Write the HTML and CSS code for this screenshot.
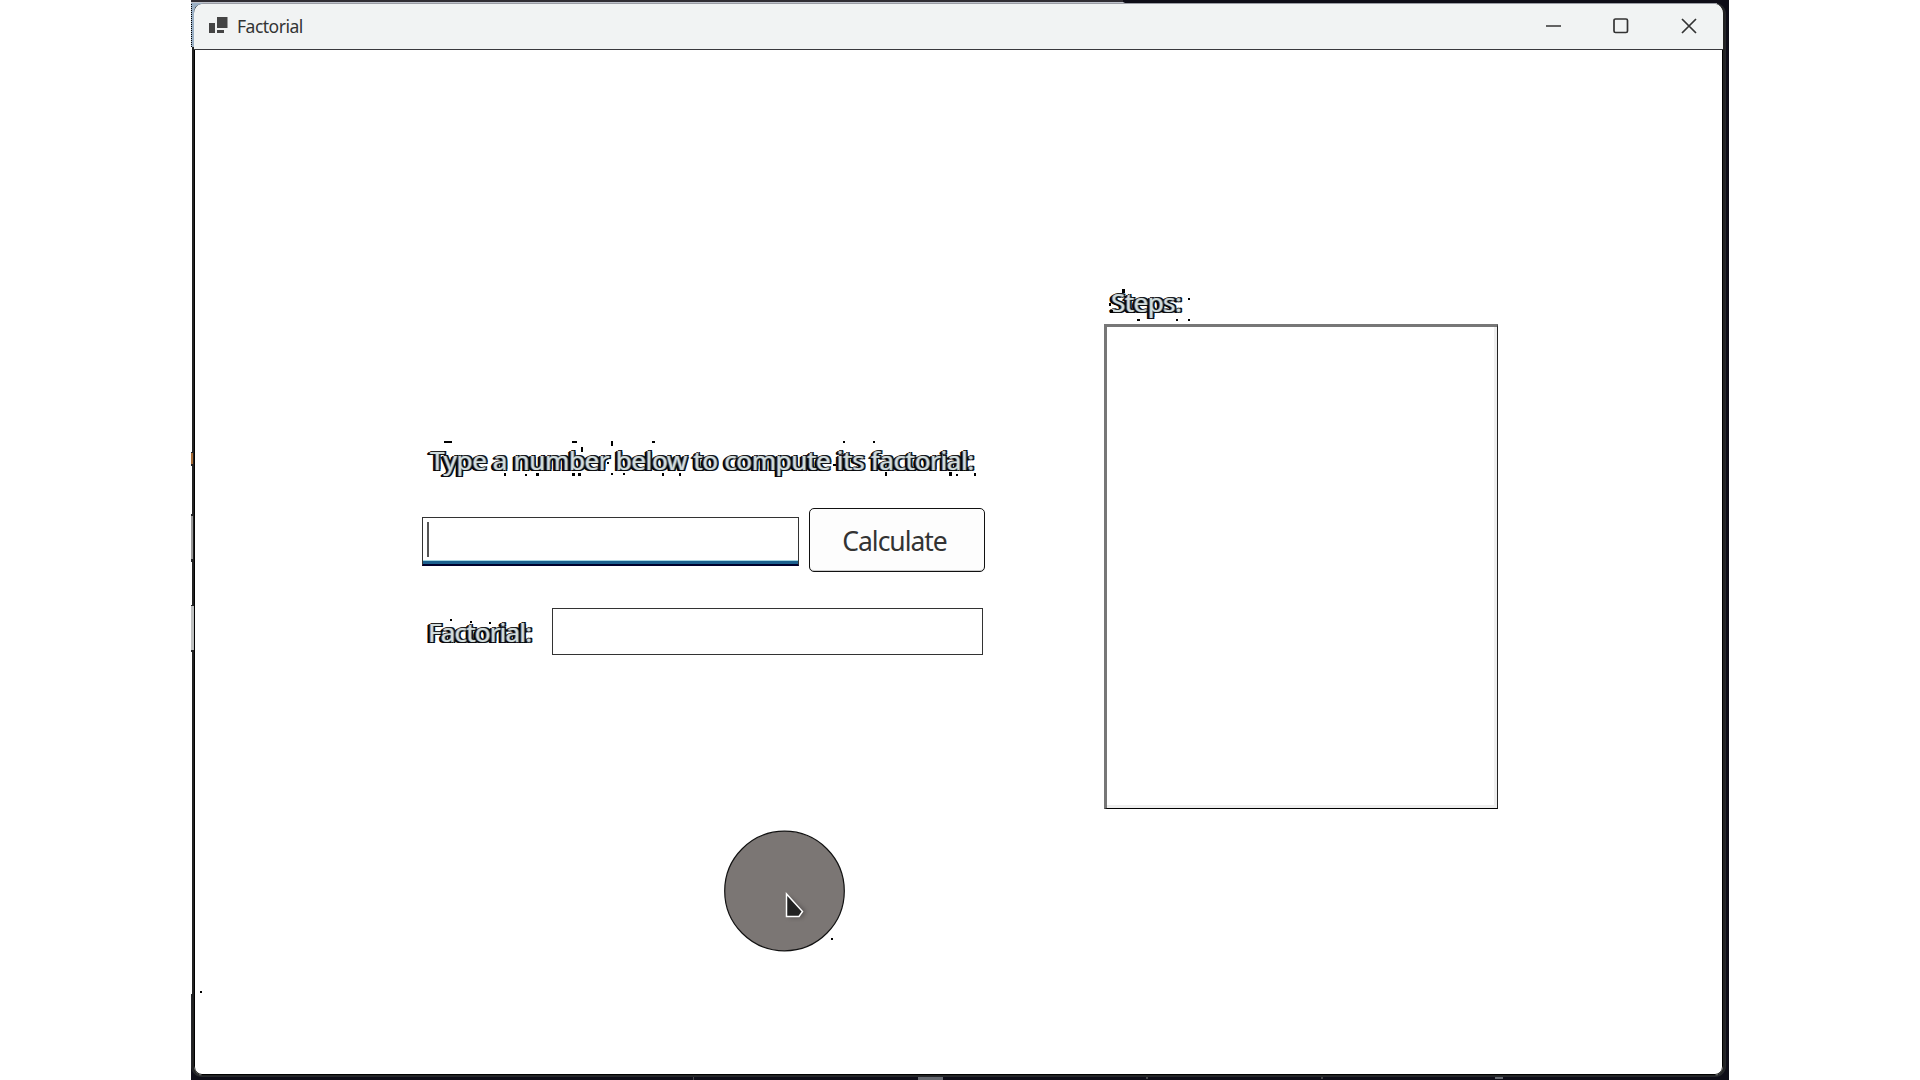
FILE: index.html
```
<!DOCTYPE html>
<html lang="en">
<head>
<meta charset="utf-8">
<title>Factorial</title>
<link rel="stylesheet" href="styles.css">
</head>
<body>
<div class="desktop">
  <section class="window">
    <header class="titlebar">
      <svg class="app-icon" width="19" height="17" viewBox="0 0 19 17"><path fill="#444" d="M0 6h6v10H0zM8 0h10.500v11H8zM8 13h7v3H8z"/></svg>
      <h1 class="title"><span>Factorial</span></h1>
      <svg class="controls" width="152" height="18" viewBox="0 0 152 18" fill="none" stroke="#333" stroke-width="1.700"><path d="M0 9h15"/><rect x="68" y="2" width="13.500" height="13.500" rx="1.500"/><path d="M136 2l14 14M150 2l-14 14"/></svg>
    </header>
    <main class="client">
      <form class="calculator">
        <label class="label prompt"><span>Type a number below to compute its factorial:</span></label>
        <div class="entry">
          <div class="number-box"><i class="caret"></i></div>
          <button class="calculate" type="button"><span>Calculate</span></button>
        </div>
        <div class="result">
          <label class="label factorial-label"><span>Factorial:</span></label>
          <div class="result-box"></div>
        </div>
      </form>
      <section class="steps">
        <h2 class="label steps-label"><span>Steps:</span></h2>
        <div class="steps-list"></div>
      </section>
    </main>
  </section>
  <svg class="overlay" width="1538" height="1080" viewBox="191 0 1538 1080">
    <path fill="#302d33" d="M191 0h932v3H191z"/><path fill="#bfc2cb" d="M191 2h932l4 2H191z"/><path fill="#9b9da5" d="M193 3h1524v1H193z"/>
    <path fill="#9bb0c5" d="M191 3h12q-9 2-9 10v34h-3z"/>
    <path stroke="#000" stroke-dasharray="1 1" d="M190.500 4v43M191.500 4v43"/>
    <path fill="#fff" d="M191 47h1v405h-1zM191 466h1v48h-1zM191 562h1v43h-1zM191 652h1v342h-1z"/>
    <path fill="#a66b36" d="M191 453h2v11h-2z"/><path fill="#999" d="M191 516h2v43h-2z"/><path fill="#bec0c0" d="M191 606h3v44h-3z"/>
    <path fill="#666970" d="M918 1077h25v3h-25zM1495 1077h8v2h-8z"/><path fill="#444" d="M693 1077h1v3h-1zM1146 1077h2v2h-2zM1321 1077h2v2h-2z"/>
    <path d="M444 441h8v2h-8zM572 441h5v2h-5zM652 441h3v2h-3zM611 441h2v5h-2zM581 447h2v5h-2zM843 441h2v2h-2zM873 441h2v2h-2zM504 473h2v3h-2zM525 474h2v2h-2zM536 473h3v3h-3zM572 473h3v3h-3zM578 473h3v3h-3zM611 473h2v2h-2zM623 473h2v2h-2zM662 473h2v3h-2zM679 473h2v3h-2zM949 472h3v4h-3zM956 474h2v2h-2zM974 473h2v3h-2zM885 472h2v4h-2zM607 462h2v2h-2zM833 464h3v2h-3zM450 619h2v2h-2zM470 621h2v2h-2zM489 622h2v2h-2zM1188 298h2v2h-2zM1188 319h2v2h-2zM1176 319h2v2h-2zM1137 319h3v2h-3zM1109 303h2v3h-2zM1110 310h3v3h-3zM1122 289h3v4h-3zM200 991h2v2h-2zM831 938h2v2h-2z"/>
  </svg>
  <svg class="pointer" width="123" height="123" viewBox="723 830 123 123">
    <circle cx="784.500" cy="891" r="59.800" fill="#7b7674" stroke="#111" stroke-width="1.200"/>
    <path d="M788 895l18 16-4 7h-13z" fill="#44403f" opacity=".55" style="filter:blur(2px)"/>
    <path d="M786.500 894v22.500h12.500l3.500-5z" fill="#222" stroke="#fff" stroke-width="1.500"/>
  </svg>
</div>
</body>
</html>
```
FILE: styles.css
```
* { box-sizing: border-box; }
body { margin: 0; background: #fff; font-family: "Noto Sans", "Open Sans", sans-serif; }
.desktop { position: relative; width: 1538px; height: 1080px; margin-left: 191px; padding: 4px 4px 4px 1px; background: #0e0d17; overflow: hidden; }
.window { display: flex; flex-direction: column; height: 1072px; border: solid #222; border-width: 0 2px 1px 2px; border-radius: 10px; background: #fff; overflow: hidden; box-shadow: 0 0 0 1px #25272b; }
.titlebar { display: flex; align-items: center; flex: none; height: 46px; padding: 0 25px 0 15px; background: #f1f3f3; border-bottom: 1px solid #38383c; }
.app-icon { margin-top: -3px; }
.title { width: 68px; margin: -2px auto 0 9px; font-size: 17.500px; line-height: 24px; font-weight: 400; color: #333; white-space: nowrap; letter-spacing: -.5px; }
.controls { margin-top: -2px; }
.client { display: flex; flex: 1; padding: 234px 0 0 227px; border: solid #000; border-width: 0 1px 1px; border-radius: 0 0 8px 8px; }
.calculator { width: 563px; padding-top: 158px; }
.label { display: block; margin: 0; white-space: nowrap; font-size: 26px; line-height: 36px; font-weight: 400; color: #d3dddd; text-shadow: 1px 0 #416b88, -1px 0 #6b5143, 0 1px #111, 0 -1px #222, 2px 1px #05070f, -2px 1px #05070f, 2px -1px #05070f, -2px 0 #05070f, -3px 1px #000; }
.prompt { margin-left: 8px; letter-spacing: -.35px; }
.entry { display: flex; align-items: flex-start; margin-top: 30px; }
.number-box { width: 377px; height: 49px; margin: 9px 10px 0 0; padding: 4px; border: 1px solid #333; border-bottom: 2px solid #00002c; box-shadow: inset 0 -3px #1b608e, inset 0 -4px #a5d7e3; }
.caret { display: block; width: 2px; height: 35px; background: #555; }
.calculate { width: 176px; height: 64px; padding: 2px 5px 0 0; border: 1px solid #111; border-radius: 5px; background: #fdfdfd; font: 26.500px/36px "Noto Sans", sans-serif; letter-spacing: -1.05px; color: #333; box-shadow: inset 0 -1px #ccc; }
.result { display: flex; margin-top: 36px; }
.factorial-label { width: 130px; padding: 6px 0 0 6px; letter-spacing: -.8px; }
.result-box { width: 431px; height: 47px; border: 1px solid #333; }
.steps { width: 394px; margin-left: 119px; }
.steps-label { height: 40px; padding: 0 0 0 7px; letter-spacing: -.55px; }
.steps-list { height: 485px; border: solid; border-width: 3px 1px 1px 3px; border-color: #777 #222 #000 #777; box-shadow: inset -3px -3px #eee; }
.overlay, .pointer { position: absolute; pointer-events: none; }
.overlay { left: 0; top: 0; }
.pointer { left: 532px; top: 830px; }
```
